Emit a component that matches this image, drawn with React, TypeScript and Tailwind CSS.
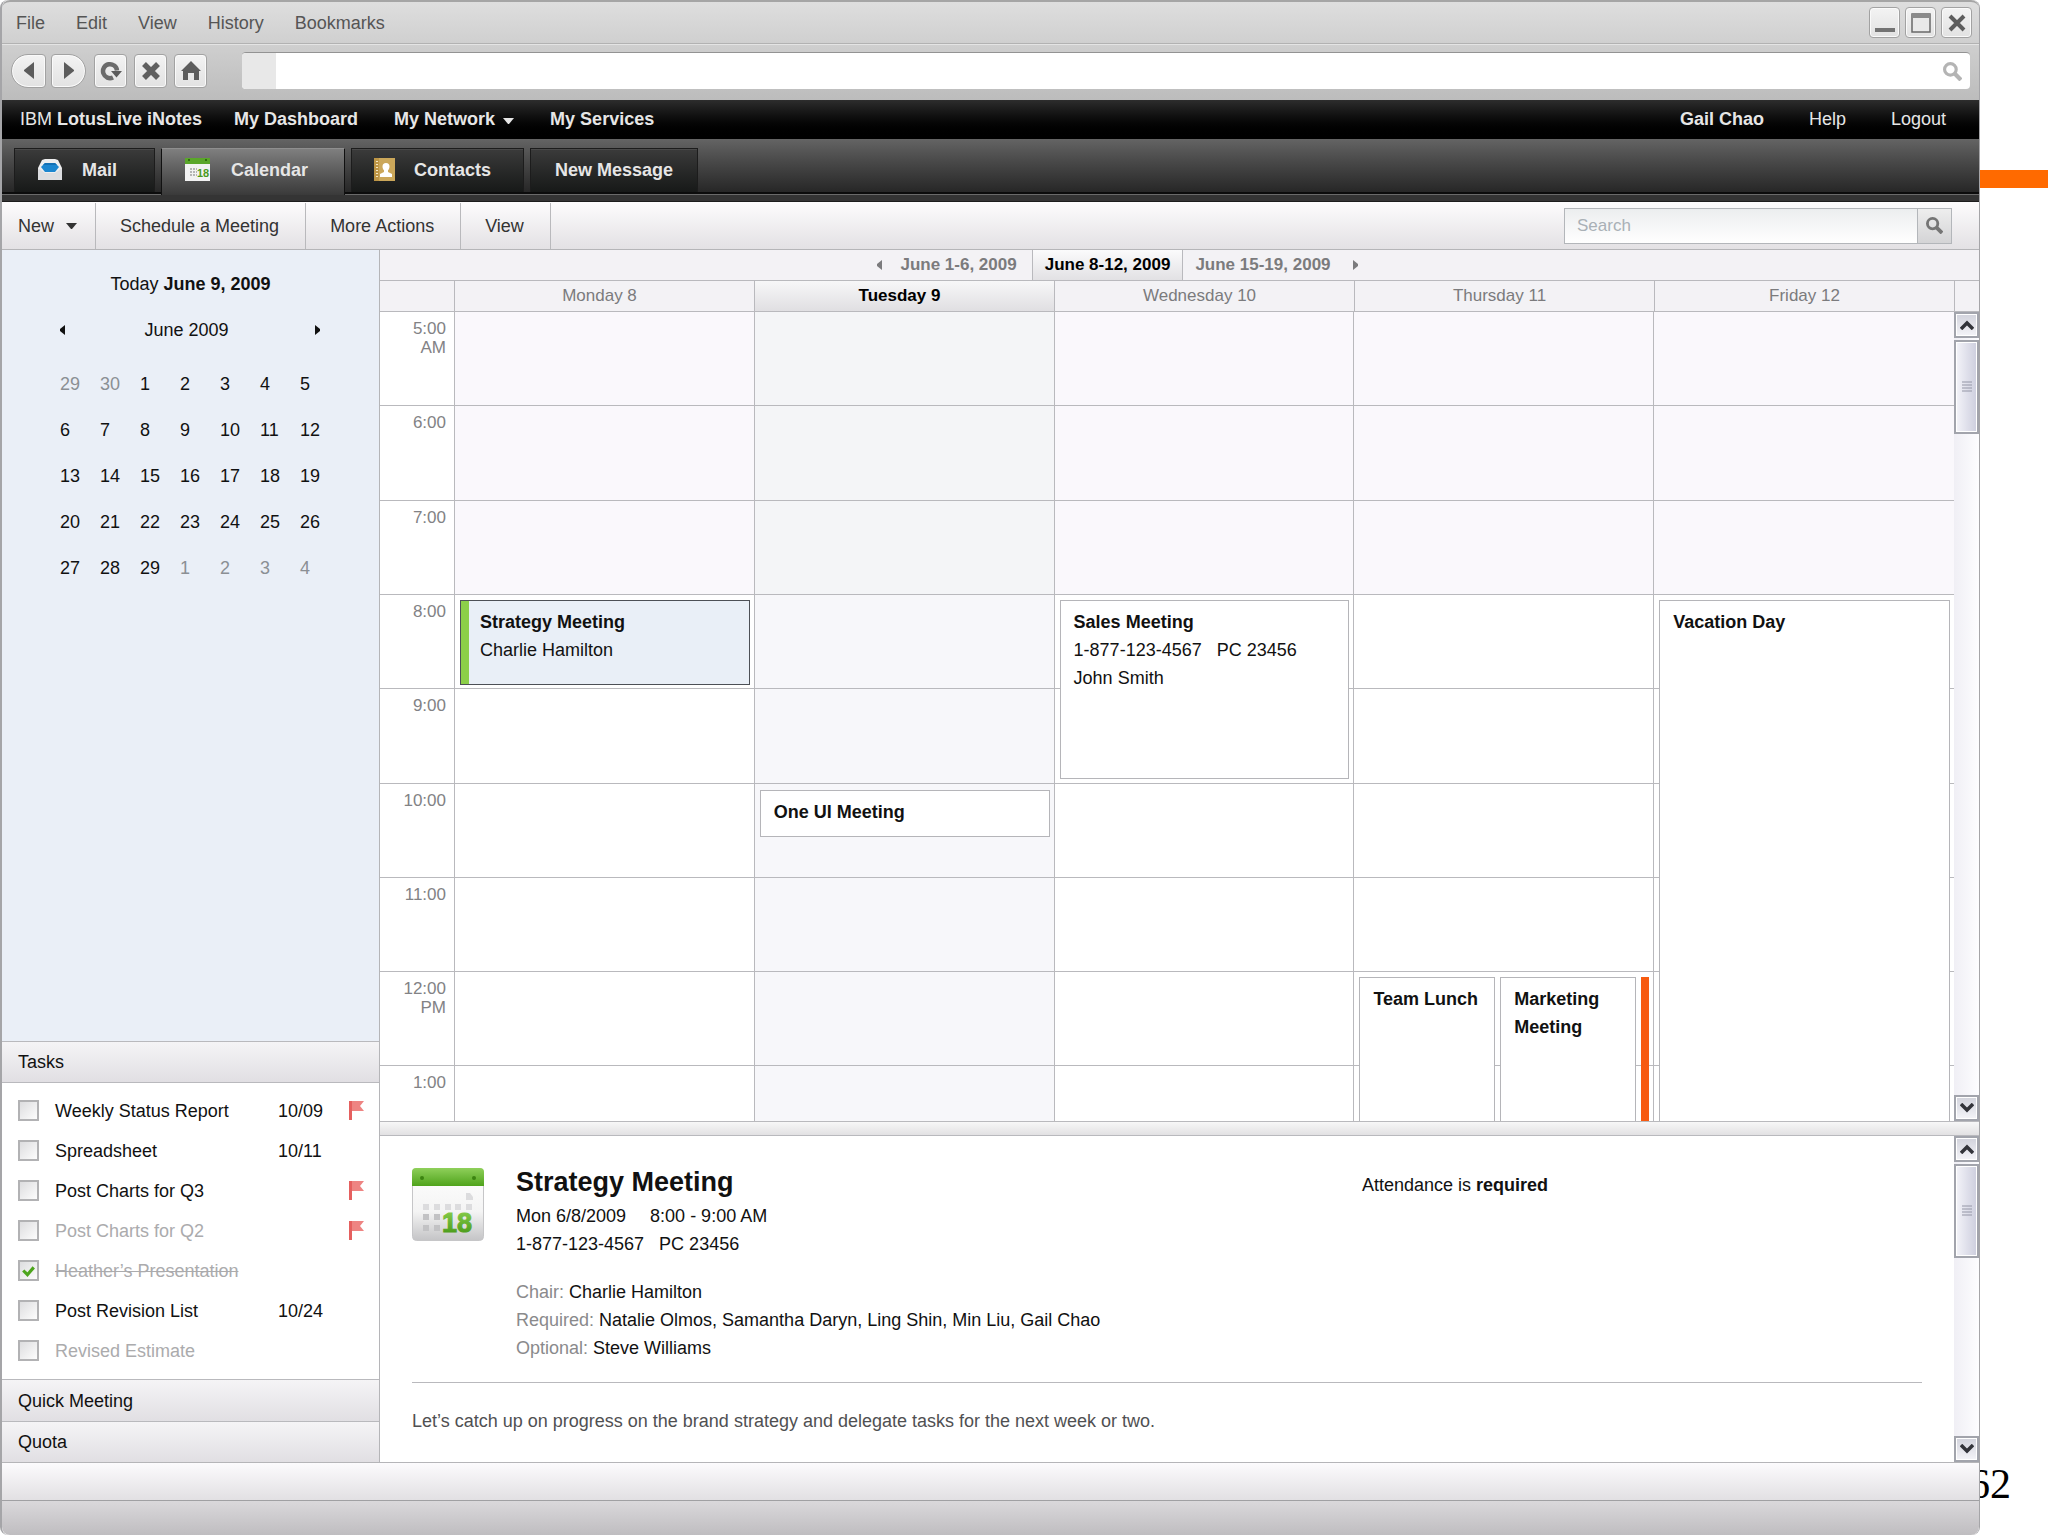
import React from 'react';

const menus = ['File', 'Edit', 'View', 'History', 'Bookmarks'];

const hours = ['5:00 AM', '6:00', '7:00', '8:00', '9:00', '10:00', '11:00', '12:00 PM', '1:00'];

const days = ['Monday 8', 'Tuesday 9', 'Wednesday 10', 'Thursday 11', 'Friday 12'];

const weeks = [
  [29, 30, 1, 2, 3, 4, 5],
  [6, 7, 8, 9, 10, 11, 12],
  [13, 14, 15, 16, 17, 18, 19],
  [20, 21, 22, 23, 24, 25, 26],
  [27, 28, 29, 1, 2, 3, 4],
];

const tasks = [
  { name: 'Weekly Status Report', date: '10/09', flag: true },
  { name: 'Spreadsheet', date: '10/11' },
  { name: 'Post Charts for Q3', flag: true },
  { name: 'Post Charts for Q2', flag: true, muted: true },
  { name: 'Heather’s Presentation', muted: true, done: true },
  { name: 'Post Revision List', date: '10/24' },
  { name: 'Revised Estimate', muted: true },
];

const CalendarIcon: React.FC<{ className: string }> = ({ className }) => (
  <svg viewBox="0 0 72 73" className={className} aria-hidden="true">
    <defs>
      <linearGradient id="cal-top" x1="0" y1="0" x2="0" y2="1">
        <stop offset="0" stopColor="#8fd05a" />
        <stop offset="1" stopColor="#4fa31b" />
      </linearGradient>
      <linearGradient id="cal-page" x1="0" y1="0" x2="0" y2="1">
        <stop offset="0" stopColor="#ffffff" />
        <stop offset="0.6" stopColor="#f4f4f4" />
        <stop offset="1" stopColor="#c4c4c6" />
      </linearGradient>
      <linearGradient id="cal-num" x1="0" y1="0" x2="0" y2="1">
        <stop offset="0" stopColor="#8ed24f" />
        <stop offset="1" stopColor="#3f9212" />
      </linearGradient>
    </defs>
    <rect x="0.5" y="0.5" width="71" height="72" rx="4" fill="url(#cal-page)" stroke="#c6c6c8" />
    <path d="M0 18V4a4 4 0 0 1 4-4h64a4 4 0 0 1 4 4v14z" fill="url(#cal-top)" />
    <circle cx="10" cy="10" r="2" fill="#3c8411" />
    <circle cx="62" cy="10" r="2" fill="#3c8411" />
    <path d="M54 25h4l3 4v3h-7zM11 36h6v6h-6zM22 36h6v6h-6zM33 36h6v6h-6zM43 36h6v6h-6zM54 36h6v6h-6z" fill="#dcdcde" />
    <path d="M11 46h6v6h-6zM22 46h6v6h-6zM11 57h6v6h-6zM22 57h6v6h-6z" fill="#c2c2c4" />
    <text x="30" y="64" fontSize="27" fontWeight="bold" fontFamily="Liberation Sans, Arial, sans-serif" fill="url(#cal-num)" stroke="url(#cal-num)" strokeWidth="1">
      18
    </text>
  </svg>
);

const SmallCalendarIcon = () => (
  <svg viewBox="0 0 25 23" className="h-[23px] w-[25px]" aria-hidden="true">
    <rect width="25" height="23" fill="#f2f2f2" />
    <rect width="25" height="6" fill="#5aa62a" />
    <path d="M4 1v2M21 1v2" stroke="#2f6d0d" strokeWidth="2" />
    <path d="M5 11h7M5 14h7M5 17h7" stroke="#b5b5b5" strokeWidth="2" strokeDasharray="2 1" />
    <text x="12" y="19" fontSize="11" fontWeight="bold" fontFamily="Liberation Sans, Arial, sans-serif" fill="#4a9a1c">
      18
    </text>
  </svg>
);

const MailIcon = () => (
  <svg viewBox="0 0 26 21" className="h-[21px] w-[26px]" aria-hidden="true">
    <path d="M1 9 5 1 8 0h10l3 1 4 8v12H1z" fill="#eeeeef" />
    <path d="M4 8 8 4h10l4 4-4 5H8z" fill="#1c86cf" />
    <path d="M8 4h10l2 2H6z" fill="#1470b4" />
    <path d="M1 20h24v1H1zM1 9l7 5h10l7-5v11H1z" fill="#dcdde0" />
  </svg>
);

const ContactsIcon = () => (
  <svg viewBox="0 0 21 23" className="h-[23px] w-[21px]" aria-hidden="true">
    <rect width="21" height="23" fill="#bd9545" />
    <rect x="5" width="16" height="23" fill="#cba75a" />
    <path d="M3 3v18" stroke="#f6e7c4" strokeWidth="2" strokeDasharray="1 2" />
    <path d="M12 5a3.500 3.500 0 0 1 3.500 3.500c0 2-.8 3-1.500 3.800V14l4 2v3H6v-3l4-2v-1.700c-.7-.8-1.500-1.800-1.500-3.800A3.500 3.500 0 0 1 12 5z" fill="#fff" />
  </svg>
);

const Caret = ({ className }: { className: string }) => (
  <svg viewBox="0 0 11 6" className={className} fill="currentColor" aria-hidden="true">
    <path d="M0 0h11L6 6H5z" />
  </svg>
);

const SideArrow = ({ left = false }: { left?: boolean }) => (
  <svg viewBox="0 0 5 10" className="h-[10px] w-[5px]" fill="currentColor" aria-hidden="true">
    <path d={left ? 'M5 0v10L0 6V4z' : 'M0 0v10l5-4V4z'} />
  </svg>
);

const FlagIcon = () => (
  <svg viewBox="0 0 15 19" className="mb-0.5 h-[19px] w-[15px]" aria-label="Flagged">
    <path d="M0 0h15l-4 5 4 5H3v9H0z" fill="#ee8482" />
    <path d="M0 0h3v19H0z" fill="#e5605f" />
  </svg>
);

const Magnifier = ({ className }: { className: string }) => (
  <svg viewBox="0 0 18 18" className={className} fill="none" stroke="currentColor" aria-hidden="true">
    <circle cx="7" cy="7" r="5.500" strokeWidth="3" />
    <path d="m11 11 6 6" strokeWidth="4" />
  </svg>
);

const chromeButton =
  'flex items-center justify-center border border-[#a2a2a2] bg-linear-to-b from-[#f3f3f3] to-[#e2e2e2] text-[#5c5c5c] shadow-[inset_0_0_0_1px_#fafafa]';

const BrowserBar = () => (
  <header className="rounded-t-lg border-t-2 border-t-[#a5a5a5] bg-linear-to-b from-[#dedede] to-[#bcbcbc]">
    <div className="flex h-[42px] items-center justify-between border-b border-[#b2b2b2] pr-[7px] pl-3.5">
      <nav className="flex gap-[31px] text-[#555]">
        {menus.map((m) => (
          <button key={m}>{m}</button>
        ))}
      </nav>
      <div className="flex gap-[5px]">
        <button aria-label="Minimize" className={`h-[31px] w-[31px] rounded ${chromeButton}`}>
          <svg viewBox="0 0 20 20" className="h-5 w-5">
            <path d="M0 15h20v4H0z" fill="#737373" />
          </svg>
        </button>
        <button aria-label="Maximize" className={`h-[31px] w-[31px] rounded ${chromeButton}`}>
          <svg viewBox="0 0 20 20" className="h-5 w-5">
            <rect x="1" y="1" width="18" height="18" fill="#e9e9e9" stroke="#686868" strokeWidth="1.500" />
            <path d="M1 1h18v4H1z" fill="#8a8a8a" />
          </svg>
        </button>
        <button aria-label="Close" className={`h-[31px] w-[31px] rounded ${chromeButton}`}>
          <svg viewBox="0 0 20 20" className="h-5 w-5">
            <path d="m3 3 14 14M17 3 3 17" stroke="#5d5d5d" strokeWidth="4" />
          </svg>
        </button>
      </div>
    </div>
    <div className="flex h-[56px] items-center border-t border-[#e4e4e4] pr-[9px] pb-1 pl-[9px]">
      <div className="flex gap-[5px]">
        <button aria-label="Back" className={`h-[34px] w-[35px] rounded-l-[17px] rounded-r ${chromeButton}`}>
          <svg viewBox="0 0 10 17" className="h-[17px] w-[10px]" fill="currentColor">
            <path d="M10 0v17L0 9V8z" />
          </svg>
        </button>
        <button aria-label="Forward" className={`h-[34px] w-[35px] rounded-l rounded-r-[17px] ${chromeButton}`}>
          <svg viewBox="0 0 10 17" className="h-[17px] w-[10px]" fill="currentColor">
            <path d="M0 0v17l10-8V8z" />
          </svg>
        </button>
      </div>
      <div className="ml-2 flex gap-[7px]">
        <button aria-label="Reload" className={`h-[34px] w-[33px] rounded ${chromeButton}`}>
          <svg viewBox="0 0 22 20" className="h-5 w-[22px]">
            <path d="M13 16.500A7 7 0 1 1 17 9.500" fill="none" stroke="#6b6b6b" strokeWidth="4.500" />
            <path d="M11 10h11l-5.500 6.500z" fill="#5c5c5c" />
          </svg>
        </button>
        <button aria-label="Stop" className={`h-[34px] w-[33px] rounded ${chromeButton}`}>
          <svg viewBox="0 0 20 20" className="h-5 w-5">
            <path d="m3 3 14 14M17 3 3 17" stroke="#5f5f5f" strokeWidth="5.500" />
          </svg>
        </button>
        <button aria-label="Home" className={`h-[34px] w-[33px] rounded ${chromeButton}`}>
          <svg viewBox="0 0 20 20" className="h-5 w-5" fill="currentColor">
            <path d="m10 0 10 10h-2v9h-5v-7H7v7H2v-9H0z" />
          </svg>
        </button>
      </div>
      <div className="ml-[35px] flex h-[37px] flex-1 items-center overflow-hidden rounded border-t border-t-[#939393] bg-white pr-2">
        <div className="h-full w-[34px] bg-[#e8e8e8]" />
        <input aria-label="Address" className="h-full flex-1 px-2 outline-none" />
        <Magnifier className="h-[19px] w-[19px] text-[#b4b4b4]" />
      </div>
    </div>
  </header>
);

const tabClass =
  'flex h-[44px] items-center border border-b-0 border-[#1c1c1c] bg-linear-to-b from-[#3b3b3b] to-[#171918] pb-0.5 shadow-[inset_0_1px_0_#4a4a4a]';

const AppHeader = () => (
  <div className="text-[#e6e6e6]">
    <div className="flex h-[39px] items-center justify-between bg-linear-to-b from-[#2d2d2d] to-black pr-[33px] pb-0.5 pl-[18px] font-bold">
      <nav className="flex items-center">
        <a href="#home">
          <span className="font-normal">IBM</span> LotusLive iNotes
        </a>
        <a href="#dashboard" className="ml-8">My Dashboard</a>
        <a href="#network" className="ml-9 flex items-center gap-2">
          My Network <Caret className="mt-1 h-[6px] w-[11px]" />
        </a>
        <a href="#services" className="ml-9">My Services</a>
      </nav>
      <nav className="flex items-center gap-[45px]">
        <a href="#profile">Gail Chao</a>
        <a href="#help" className="font-normal">Help</a>
        <a href="#logout" className="font-normal">Logout</a>
      </nav>
    </div>
    <nav className="flex h-[55px] items-end gap-1.5 border-b-2 border-[#0c0c0c] bg-linear-to-b from-[#646464] to-[#272727] pl-3 font-bold">
      <button className={`w-[141px] gap-[19px] pl-[22px] ${tabClass}`}>
        <MailIcon /> Mail
      </button>
      <button className="relative -mb-[3px] flex h-[47px] w-[184px] items-center gap-[21px] border-x border-t border-x-[#111] border-t-[#8f8f8f] bg-linear-to-b from-[#7f7f7f] to-[#3a3a3a] pb-[5px] pl-[23px]">
        <SmallCalendarIcon /> Calendar
      </button>
      <button className={`w-[173px] gap-[19px] pl-[22px] ${tabClass}`}>
        <ContactsIcon /> Contacts
      </button>
      <button className={`w-[168px] justify-center ${tabClass}`}>New Message</button>
    </nav>
    <div className="h-2 border-t border-b border-t-[#6a6a6a] border-b-[#1d1d1d] bg-[#343434]" />
  </div>
);

const toolClass = 'border-r border-[#b9b9bc] pr-[26px] pl-6';

const Toolbar = () => (
  <div className="flex h-[48px] items-center justify-between border-b border-[#b5b5b8] bg-linear-to-b from-[#fdfcfd] to-[#e3e1e4] pr-[27px] text-[#333]">
    <div className="flex h-full pt-px">
      <button className="flex items-center gap-3 border-r border-[#b9b9bc] pr-[18px] pl-4">
        New <Caret className="h-[6px] w-[11px]" />
      </button>
      <button className={toolClass}>Schedule a Meeting</button>
      <button className={toolClass}>More Actions</button>
      <button className={toolClass}>View</button>
    </div>
    <form className="flex h-9 w-[388px] border border-[#b3b6ba]">
      <input
        aria-label="Search"
        placeholder="Search"
        className="min-w-0 flex-1 bg-linear-to-b from-[#eceeef] to-white px-3 text-[17px] outline-none placeholder:text-[#a9b0b6]"
      />
      <button aria-label="Go" type="button" className="flex w-[34px] items-center justify-center border-l border-[#b3b6ba] bg-linear-to-b from-[#eeeeee] to-[#d4d4d6] text-[#757575]">
        <Magnifier className="h-[17px] w-[17px]" />
      </button>
    </form>
  </div>
);

const barClass = 'w-full border-t border-[#b9b9bd] bg-linear-to-b from-[#f5f4f6] to-[#e1dfe3] px-4 text-left';

const MiniCalendar = () => (
  <div className="flex-1 bg-[#eaeff7] pt-[22px]">
    <p className="text-center">
      Today <b>June 9, 2009</b>
    </p>
    <div className="mt-[22px] grid grid-cols-[84px_1fr_84px]">
      <button aria-label="Previous month" className="pl-[58px]">
        <SideArrow left />
      </button>
      <span className="pr-2 text-center">June 2009</span>
      <button aria-label="Next month" className="pl-5">
        <SideArrow />
      </button>
    </div>
    <table className="mt-[19px] ml-[58px] table-fixed">
      <tbody>
        {weeks.map((week, w) => (
          <tr key={w} className="h-[46px]">
            {week.map((d, i) => {
              const outside = (w === 0 && d > 20) || (w === 4 && d < 10);
              return (
                <td key={i} className={`w-10 ${outside ? 'text-[#8b8f94]' : ''}`}>
                  {d}
                </td>
              );
            })}
          </tr>
        ))}
      </tbody>
    </table>
  </div>
);

const TaskList = () => (
  <ul className="border-t border-[#b9b9bd] pt-2 pb-2">
    {tasks.map((t) => (
      <li key={t.name} className={`flex h-10 items-center pl-4 ${t.muted ? 'text-[#ababad]' : ''}`}>
        <label className="flex w-[260px] items-center gap-4">
          <span className="relative mb-0.5 flex h-[21px] w-[21px]">
            <input
              type="checkbox"
              defaultChecked={t.done}
              className="peer h-[21px] w-[21px] appearance-none border-2 border-[#b2b2b4] bg-linear-to-br from-[#dddddf] to-[#fdfdfd]"
            />
            <svg viewBox="0 0 20 20" className="pointer-events-none absolute inset-0 hidden peer-checked:block">
              <path d="m5 10 4 4 6-7" fill="none" stroke="#4da51d" strokeWidth="3" />
            </svg>
          </span>
          <span className={t.done ? 'line-through' : ''}>{t.name}</span>
        </label>
        <span className="w-[71px]">{t.date}</span>
        {t.flag && <FlagIcon />}
      </li>
    ))}
  </ul>
);

const Sidebar = () => (
  <aside className="flex w-[378px] shrink-0 flex-col border-r border-[#b5b5b8]">
    <MiniCalendar />
    <button className={`h-[41px] ${barClass}`}>Tasks</button>
    <TaskList />
    <button className={`h-[42px] ${barClass}`}>Quick Meeting</button>
    <button className={`h-[41px] ${barClass}`}>Quota</button>
  </aside>
);

const ScrollButton = ({ up = false }: { up?: boolean }) => (
  <button
    aria-label={up ? 'Scroll up' : 'Scroll down'}
    className="flex h-[26px] items-center justify-center border-2 border-[#a2a4ac] bg-linear-to-b from-[#d2d3dc] to-[#f4f4f8] shadow-[inset_0_0_0_1px_#fff]"
  >
    <svg viewBox="0 0 14 10" className="h-[10px] w-[14px]">
      <path d={up ? 'm1 9 6-6 6 6' : 'm1 1 6 6 6-6'} fill="none" stroke="#33343a" strokeWidth="3.500" />
    </svg>
  </button>
);

const Scrollbar = () => (
  <div className="flex w-[25px] shrink-0 flex-col bg-linear-to-r from-[#f0eff5] to-[#fdfdff]">
    <ScrollButton up />
    <div className="mt-0.5 flex h-[94px] items-center justify-center border-2 border-[#a2a4ac] bg-linear-to-r from-[#f4f4f9] to-[#cdcede] shadow-[inset_0_0_0_1px_#fff]">
      <svg viewBox="0 0 10 12" className="h-3 w-[10px]">
        <path d="M0 1h10M0 4h10M0 7h10M0 10h10" stroke="#9496a6" />
      </svg>
    </div>
    <div className="flex-1" />
    <ScrollButton />
  </div>
);

const WeekNav = () => (
  <nav className="flex h-[31px] items-center justify-center border-b border-[#b9b9bd] bg-[#f3f2f5] text-[17px] font-bold text-[#7b7b7d]">
    <button aria-label="Previous week" className="pr-[18px]">
      <SideArrow left />
    </button>
    <button className="pr-[15px]">June 1-6, 2009</button>
    <button className="h-full border-x border-[#b9b9bd] bg-linear-to-b from-[#fbfbfc] to-[#e2e1e4] px-3 text-black">June 8-12, 2009</button>
    <button className="pl-3">June 15-19, 2009</button>
    <button aria-label="Next week" className="pr-[124px] pl-[22px]">
      <SideArrow />
    </button>
  </nav>
);

const DayHeader = () => (
  <div className="flex h-[31px] border-b border-[#b9b9bd] bg-[#f3f2f5] text-[17px] text-[#7b7b7d]">
    <div className="grid flex-1 grid-cols-[75px_repeat(5,minmax(0,1fr))]">
      <div className="border-r border-[#b9b9bd]" />
      {days.map((d) => (
        <div
          key={d}
          className={`flex items-center justify-center border-r border-[#b9b9bd] pr-2.5 last:pr-0 ${
            d === 'Tuesday 9' ? 'bg-linear-to-b from-[#f7f7f8] to-[#e0dfe2] font-bold text-black' : ''
          }`}
        >
          {d}
        </div>
      ))}
    </div>
    <div className="w-6 shrink-0" />
  </div>
);

const eventBox = 'z-10 border border-[#b5b5b9] bg-white px-[13px] pt-[7px] leading-7';

const WeekGrid = () => (
  <div className="flex flex-1">
    <div className="grid flex-1 grid-cols-[75px_repeat(5,minmax(0,1fr))] grid-rows-[repeat(8,19fr)_11fr]">
      {hours.map((h, r) => (
        <React.Fragment key={h}>
          <div
            className={`flex justify-end border-r border-[#b9b9bd] pt-[7px] pr-2 pl-4 text-right text-[17px] leading-[19px] text-[#828285] ${r < 8 ? 'border-b' : ''}`}
            style={{ gridRow: r + 1, gridColumn: 1 }}
          >
            {h}
          </div>
          {days.map((d, c) => (
            <div
              key={d}
              className={`border-[#b9b9bd] ${r < 8 ? 'border-b' : ''} ${c < 4 ? 'border-r' : ''} ${
                c === 1 ? (r < 3 ? 'bg-[#f4f5f7]' : 'bg-[#f7f7fa]') : r < 3 ? 'bg-[#faf8fc]' : ''
              }`}
              style={{ gridRow: r + 1, gridColumn: c + 2 }}
            />
          ))}
        </React.Fragment>
      ))}

      <article className="z-10 col-start-2 row-start-4 mt-[5px] mr-[5px] mb-1 ml-[5px] border border-[#4c5056] bg-[#e9eff7] leading-7">
        <div className="h-full border-l-8 border-[#8ccf49] pt-[7px] pl-[11px]">
          <h3 className="font-bold">Strategy Meeting</h3>
          <p>Charlie Hamilton</p>
        </div>
      </article>
      <article className={`col-start-3 row-start-6 mx-[5px] mt-1.5 h-[47px] self-start ${eventBox}`}>
        <h3 className="font-bold">One UI Meeting</h3>
      </article>
      <article className={`col-start-4 row-span-2 row-start-4 m-[5px] ${eventBox}`}>
        <h3 className="font-bold">Sales Meeting</h3>
        <p className="flex gap-[15px]">
          <span>1-877-123-4567</span>
          <span>PC 23456</span>
        </p>
        <p>John Smith</p>
      </article>
      <div className="z-10 col-start-5 row-span-2 row-start-8 mt-[5px] mr-[5px] ml-[5px] flex gap-[5px]">
        <article className={`flex-1 border-b-0 ${eventBox}`}>
          <h3 className="font-bold whitespace-nowrap">Team Lunch</h3>
        </article>
        <article className={`flex-1 border-b-0 ${eventBox}`}>
          <h3 className="font-bold">Marketing Meeting</h3>
        </article>
        <div className="w-2 bg-[#f75a10]" />
      </div>
      <article className={`col-start-6 row-span-6 row-start-4 mt-[5px] mr-1 ml-[5px] border-b-0 ${eventBox}`}>
        <h3 className="font-bold">Vacation Day</h3>
      </article>
    </div>
    <Scrollbar />
  </div>
);

const Detail = () => (
  <section className="flex h-[326px]">
    <div className="flex-1 pt-8 pr-8 pl-8">
      <div className="flex leading-7">
        <CalendarIcon className="h-[73px] w-[72px]" />
        <div className="ml-8 flex-1">
          <h2 className="text-[27px] font-bold">Strategy Meeting</h2>
          <p className="mt-1.5 flex gap-6">
            <span>Mon 6/8/2009</span>
            <span>8:00 - 9:00 AM</span>
          </p>
          <p className="flex gap-[15px]">
            <span>1-877-123-4567</span>
            <span>PC 23456</span>
          </p>
          <p className="mt-5">
            <span className="text-[#8a8a8c]">Chair:</span> Charlie Hamilton
          </p>
          <p>
            <span className="text-[#8a8a8c]">Required:</span> Natalie Olmos, Samantha Daryn, Ling Shin, Min Liu, Gail Chao
          </p>
          <p>
            <span className="text-[#8a8a8c]">Optional:</span> Steve Williams
          </p>
        </div>
        <p className="mt-[3px] w-[560px]">
          Attendance is <b>required</b>
        </p>
      </div>
      <hr className="mt-5 border-[#b9b9bd]" />
      <p className="mt-6 leading-7 text-[#505052]">Let’s catch up on progress on the brand strategy and delegate tasks for the next week or two.</p>
    </div>
    <Scrollbar />
  </section>
);

const App: React.FC = () => {
  return (
    <div className="flex min-h-screen overflow-hidden bg-white font-['Liberation_Sans',Arial,sans-serif] text-[18px] leading-6 text-[#111]">
      <div className="z-10 flex flex-1 flex-col rounded-t-lg rounded-b-lg border-r border-l-2 border-[#a5a5a8] bg-white">
        <BrowserBar />
        <AppHeader />
        <Toolbar />
        <div className="flex flex-1">
          <Sidebar />
          <main className="flex flex-1 flex-col">
            <WeekNav />
            <DayHeader />
            <WeekGrid />
            <div className="h-[15px] border-y border-[#b9b9bd] bg-linear-to-b from-[#f7f7f7] to-[#e2e1e3]" />
            <Detail />
          </main>
        </div>
        <footer>
          <div className="h-[38px] border-t border-[#b5b5b8] bg-linear-to-b from-[#fcfbfd] to-[#e2e0e3]" />
          <div className="h-[35px] rounded-b-lg border-t border-[#a0a0a3] bg-linear-to-b from-[#dad8db] to-[#bfbdc0]" />
        </footer>
      </div>
      <aside className="flex w-[68px] flex-col justify-between pt-[170px] pb-[30px]">
        <div className="h-[18px] bg-[#ff6a00]" />
        <span className="-ml-[11px] font-['Liberation_Serif',serif] text-[42px] leading-[42px] text-black">62</span>
      </aside>
    </div>
  );
};

export default App;
